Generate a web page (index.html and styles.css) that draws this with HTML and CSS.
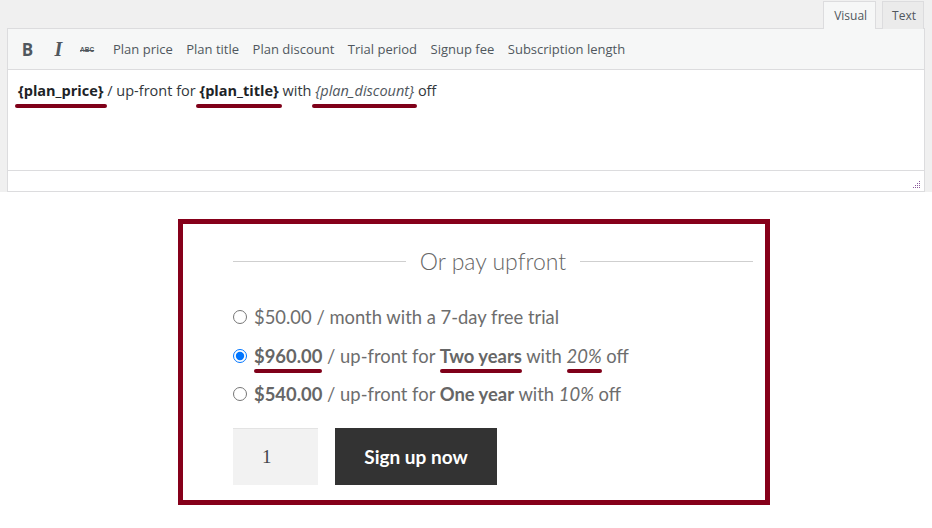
FILE: index.html
```html
<!DOCTYPE html>
<html lang="en">
<head>
<meta charset="utf-8">
<title>Subscription option editor</title>
<link rel="stylesheet" href="styles.css">
</head>
<body>
<div class="editor-wrap">
  <div class="tabs">
    <span class="tab tab-active">Visual</span>
    <span class="tab">Text</span>
  </div>
  <div class="editor">
    <div class="toolbar">
      <span class="tb-icon tb-bold">B</span>
      <span class="tb-icon tb-italic">I</span>
      <span class="tb-icon tb-strike">ABC</span>
      <span class="tb-btn">Plan price</span>
      <span class="tb-btn">Plan title</span>
      <span class="tb-btn">Plan discount</span>
      <span class="tb-btn">Trial period</span>
      <span class="tb-btn">Signup fee</span>
      <span class="tb-btn">Subscription length</span>
    </div>
    <div class="content">
      <p class="content-line"><strong class="mark">{plan_price}</strong> / up-front for <strong class="mark">{plan_title}</strong> with <em class="mark">{plan_discount}</em> off</p>
    </div>
    <div class="statusbar">
      <svg class="resize" width="9" height="9" viewBox="0 0 9 9" aria-hidden="true">
        <g fill="#8c5a9c">
          <rect x="7" y="1" width="1" height="1"/>
          <rect x="5" y="3" width="1" height="1"/><rect x="7" y="3" width="1" height="1"/>
          <rect x="3" y="5" width="1" height="1"/><rect x="5" y="5" width="1" height="1"/><rect x="7" y="5" width="1" height="1"/>
          <rect x="1" y="7" width="1" height="1"/><rect x="3" y="7" width="1" height="1"/><rect x="5" y="7" width="1" height="1"/><rect x="7" y="7" width="1" height="1"/>
        </g>
      </svg>
    </div>
  </div>
</div>

<div class="preview">
  <div class="heading">
    <span class="rule"></span>
    <h2 class="heading-text">Or pay upfront</h2>
    <span class="rule"></span>
  </div>
  <ul class="options">
    <li class="option"><input type="radio" name="plan" class="radio"><span>$50.00 / month with a 7-day free trial</span></li>
    <li class="option"><input type="radio" name="plan" class="radio" checked><span><strong class="mark mark-lg">$960.00</strong> / up-front for <strong class="mark mark-lg">Two years</strong> with <em class="mark mark-lg">20%</em> off</span></li>
    <li class="option"><input type="radio" name="plan" class="radio"><span><strong>$540.00</strong> / up-front for <strong>One year</strong> with <em>10%</em> off</span></li>
  </ul>
  <div class="actions">
    <input class="qty" type="text" value="1" aria-label="Quantity">
    <button class="signup" type="button">Sign up now</button>
  </div>
</div>
</body>
</html>
```

FILE: styles.css
```css
* { box-sizing: border-box; }

body {
  margin: 0;
  background: #fff;
  font-family: "Open Sans", "Noto Sans", sans-serif;
}

.editor-wrap {
  background: #f0f0f0;
  padding: 0 7px 0 7px;
}

.tabs {
  display: flex;
  justify-content: flex-end;
  align-items: flex-start;
  gap: 6px;
  height: 28px;
  padding-top: 1px;
  padding-right: 1px;
}

.tab {
  display: flex;
  align-items: center;
  padding: 0 7px 0 9px;
  height: 28px;
  font-size: 12px;
  color: #50575e;
  background: #ebebeb;
  border: 1px solid #dcdcde;
  border-bottom: none;
  position: relative;
}

.tab-active {
  background: #f6f7f7;
  padding: 0 8px 0 10px;
}

.editor {
  border: 1px solid #dcdcde;
  background: #fff;
}

.toolbar {
  display: flex;
  align-items: center;
  height: 41px;
  padding-left: 4px;
  background: #f6f7f7;
  border-bottom: 1px solid #dcdcde;
  color: #50575e;
}

.tb-icon {
  display: inline-flex;
  justify-content: center;
  flex: none;
  width: 31px;
  color: #50575e;
}

.tb-bold {
  font-family: "Open Sans", sans-serif;
  font-weight: 700;
  font-size: 17px;
}

.tb-italic {
  font-family: "Liberation Serif", serif;
  font-style: italic;
  font-weight: 700;
  font-size: 20px;
}

.tb-strike {
  font-family: "Liberation Sans", sans-serif;
  font-weight: 700;
  font-size: 6.5px;
  text-decoration: line-through;
  width: 39px;
  justify-content: flex-start;
  padding-left: 6px;
}

.tb-btn {
  font-size: 13px;
  margin-right: 13.5px;
  white-space: nowrap;
}

.content {
  height: 100px;
  padding: 11px 10px 0 10px;
}

.content-line {
  margin: 0;
  font-size: 14.5px;
  line-height: 20px;
  color: #32373c;
}

.content-line strong { font-weight: 700; color: #1d2327; }
.content-line em { color: #50575e; }

.mark {
  position: relative;
}

.mark::after {
  content: "";
  position: absolute;
  left: -3px;
  right: -3px;
  bottom: -8px;
  height: 4px;
  border-radius: 2px;
  background: #7f0019;
}

.statusbar {
  height: 21px;
  border-top: 1px solid #dcdcde;
  display: flex;
  justify-content: flex-end;
  align-items: flex-end;
  padding: 0 3px 2px 0;
}

.resize { display: block; }

.preview {
  width: 592px;
  margin: 27px 0 0 178px;
  border: 5px solid #86001a;
  padding: 21px 12px 15px 50px;
  font-family: "Lato", "Open Sans", sans-serif;
  color: #6d6d6d;
}

.heading {
  display: flex;
  align-items: center;
  gap: 14px;
}

.rule {
  flex: 1;
  height: 1px;
  background: #cfcfcf;
}

.heading-text {
  margin: 0;
  font-weight: 300;
  font-size: 23px;
  line-height: 32px;
  color: #666;
}

.options {
  list-style: none;
  margin: 21px 0 0 0;
  padding: 0;
}

.option {
  display: flex;
  align-items: center;
  gap: 7px;
  height: 38.5px;
  font-size: 18.4px;
}

.option strong { font-weight: 700; color: #666; }
.option em { font-style: italic; }

.radio {
  width: 14px;
  height: 14px;
  margin: 0;
}

.mark-lg::after {
  bottom: -6px;
  left: 0;
  right: 0;
}

.actions {
  display: flex;
  gap: 17px;
  margin-top: 14.5px;
}

.qty {
  width: 85px;
  height: 57px;
  border: none;
  border-top: 1px solid #e3e3e3;
  background: #f2f2f2;
  font-family: "Liberation Serif", serif;
  font-size: 19px;
  color: #43454b;
  padding: 0 0 0 29px;
}

.signup {
  width: 162px;
  height: 57px;
  border: none;
  background: #333;
  color: #fff;
  font-family: "Lato", sans-serif;
  font-weight: 700;
  font-size: 19px;
  cursor: pointer;
}
```
